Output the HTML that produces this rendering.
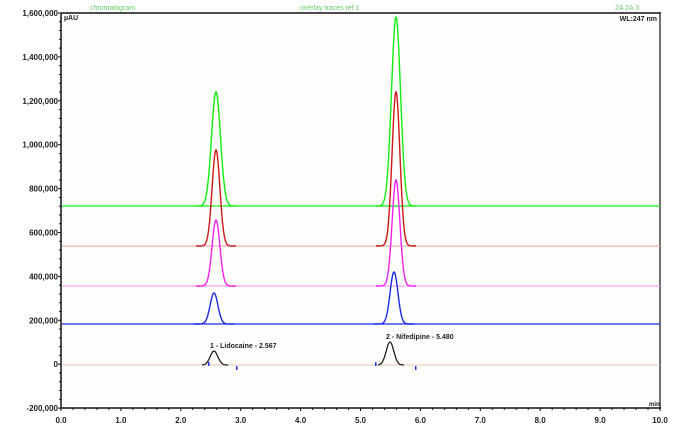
<!DOCTYPE html>
<html><head><meta charset="utf-8"><style>
html,body{margin:0;padding:0;background:#fff;}
svg{display:block;}
text{font-family:"Liberation Sans",sans-serif;font-size:8px;font-weight:bold;fill:#222;}
</style></head><body>
<svg id="s" width="681" height="435" viewBox="0 0 681 435">
<rect x="0" y="0" width="681" height="435" fill="#fff"/>
<rect x="61" y="13" width="599" height="395" fill="#fefefc"/>
<line x1="61" y1="13" x2="661" y2="13" stroke="#111" stroke-width="1.5"/>
<line x1="660" y1="13" x2="660" y2="409" stroke="#111" stroke-width="1.2"/>
<line x1="61" y1="13" x2="61" y2="409" stroke="#111" stroke-width="1.5"/>
<line x1="61" y1="408" x2="661" y2="408" stroke="#111" stroke-width="1.5"/>
<g id="yl" text-anchor="end"></g>
<g id="xl" text-anchor="middle"></g>
<text x="64" y="20" style="font-size:7px">µAU</text>
<text x="657" y="21" text-anchor="end" style="font-size:7px">WL:247 nm</text>
<text x="90" y="10" style="font-size:7px;fill:#6c6;font-weight:normal">chromatogram</text>
<text x="300" y="10" style="font-size:7px;fill:#6c6;font-weight:normal">overlay traces ref 1</text>
<text x="615" y="10" style="font-size:7px;fill:#6c6;font-weight:normal">2A 2A 3</text>
<text x="649" y="406" style="font-size:6px">min</text>
<g id="tr"></g>
<text x="210" y="348" style="font-size:7px">1 - Lidocaine - 2.567</text>
<text x="386" y="339" style="font-size:7px">2 - Nifedipine - 5.480</text>
</svg>
<script>
var ns="http://www.w3.org/2000/svg",s=document.getElementById('s');
function el(p,t,a,txt){var e=document.createElementNS(ns,t);for(var k in a)e.setAttribute(k,a[k]);if(txt)e.textContent=txt;document.getElementById(p).appendChild(e);}
var yl=["1,600,000","1,400,000","1,200,000","1,000,000","800,000","600,000","400,000","200,000","0","-200,000"];
for(var i=0;i<10;i++){var y=13+i*43.9;el('yl','text',{x:58,y:y+3},yl[i]);el('yl','line',{x1:58,y1:y,x2:61,y2:y,stroke:'#111'});
for(var j=1;j<5&&i<9;j++)el('yl','line',{x1:59,y1:y+j*8.78,x2:61,y2:y+j*8.78,stroke:'#111'});}
for(var i=0;i<=10;i++){var x=61+i*59.9;el('xl','text',{x:x,y:423},i.toFixed(1));el('xl','line',{x1:x,y1:408,x2:x,y2:411,stroke:'#111'});
for(var j=1;j<5&&i<10;j++)el('xl','line',{x1:x+j*11.98,y1:408,x2:x+j*11.98,y2:410,stroke:'#111'});}
var T=[[206,'#11ee11','#11ee11',216,92,396,17,4.5],[246,'#cc1818','#f0b0a8',216,150,396,92,3.9],[286,'#f020f0','#f4a0f0',216,220,396,180,3.9],[324,'#1a2af0','#1a2af0',214,293,394,272,3.9]];
T.forEach(function(t){el('tr','line',{x1:62,y1:t[0],x2:660,y2:t[0],stroke:t[2],'stroke-width':1.3});
[[t[3],t[4]],[t[5],t[6]]].forEach(function(p){var d='';for(var x=p[0]-20;x<=p[0]+20;x+=0.5){var y=t[0]-(t[0]-p[1])*Math.exp(-Math.pow((x-p[0])/t[7],2)/2);d+=(d?'L':'M')+x+' '+y.toFixed(2);}
el('tr','path',{d:d,fill:'none',stroke:t[1],'stroke-width':1.4});});});
el('tr','line',{x1:62,y1:365,x2:660,y2:365,stroke:'#e8c0b0','stroke-width':1});
[[214,351],[390,342]].forEach(function(p){var d='';for(var x=p[0]-12;x<=p[0]+14;x+=0.5){var y=365-(365-p[1])*Math.exp(-Math.pow((x-p[0])/3.8,2)/2);d+=(d?'L':'M')+x+' '+y.toFixed(2);}el('tr','path',{d:d,fill:'none',stroke:'#111','stroke-width':1.2});});
[[208,362],[236,366],[375,362],[415,366]].forEach(function(p){el('tr','rect',{x:p[0],y:p[1],width:1.5,height:4,fill:'#2233ee'});});
</script>
</body></html>
